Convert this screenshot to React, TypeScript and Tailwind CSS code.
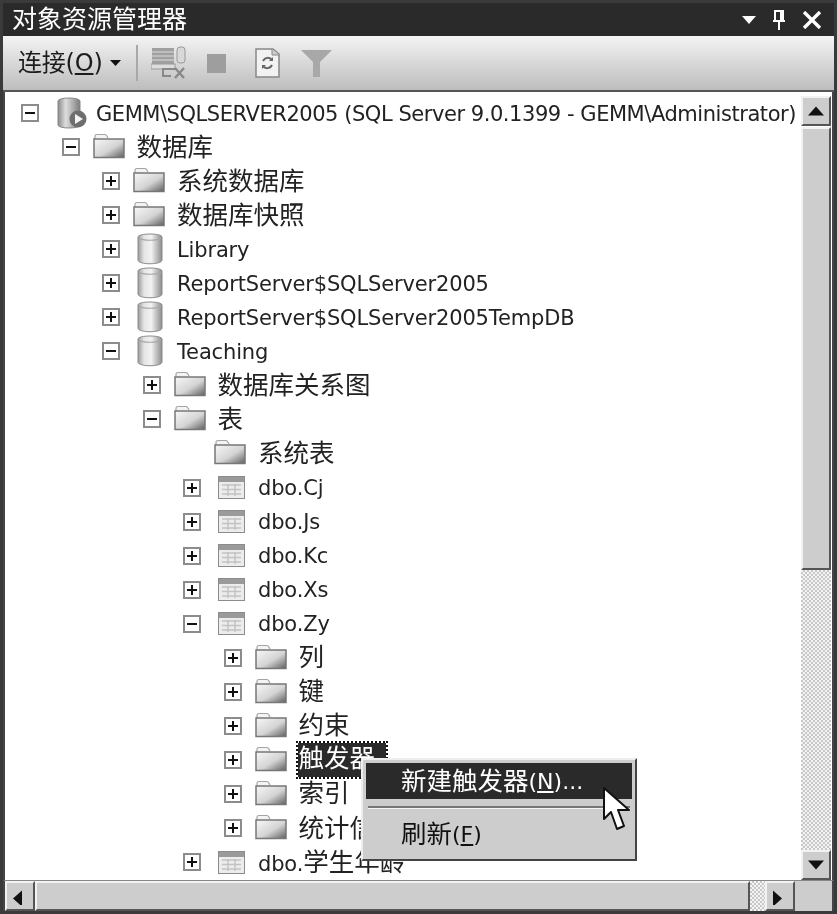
const FONT = "font-['DejaVu_Sans','Noto_Sans_CJK_SC',sans-serif]";

type NodeKind = "server" | "folder" | "db" | "table";
type TreeNode = { level: number; label: string; kind: NodeKind; exp?: "+" | "-"; focused?: boolean };

const nodes: TreeNode[] = [
  { level: 0, label: "GEMM\\SQLSERVER2005 (SQL Server 9.0.1399 - GEMM\\Administrator)", kind: "server", exp: "-" },
  { level: 1, label: "数据库", kind: "folder", exp: "-" },
  { level: 2, label: "系统数据库", kind: "folder", exp: "+" },
  { level: 2, label: "数据库快照", kind: "folder", exp: "+" },
  { level: 2, label: "Library", kind: "db", exp: "+" },
  { level: 2, label: "ReportServer$SQLServer2005", kind: "db", exp: "+" },
  { level: 2, label: "ReportServer$SQLServer2005TempDB", kind: "db", exp: "+" },
  { level: 2, label: "Teaching", kind: "db", exp: "-" },
  { level: 3, label: "数据库关系图", kind: "folder", exp: "+" },
  { level: 3, label: "表", kind: "folder", exp: "-" },
  { level: 4, label: "系统表", kind: "folder" },
  { level: 4, label: "dbo.Cj", kind: "table", exp: "+" },
  { level: 4, label: "dbo.Js", kind: "table", exp: "+" },
  { level: 4, label: "dbo.Kc", kind: "table", exp: "+" },
  { level: 4, label: "dbo.Xs", kind: "table", exp: "+" },
  { level: 4, label: "dbo.Zy", kind: "table", exp: "-" },
  { level: 5, label: "列", kind: "folder", exp: "+" },
  { level: 5, label: "键", kind: "folder", exp: "+" },
  { level: 5, label: "约束", kind: "folder", exp: "+" },
  { level: 5, label: "触发器", kind: "folder", exp: "+", focused: true },
  { level: 5, label: "索引", kind: "folder", exp: "+" },
  { level: 5, label: "统计信息", kind: "folder", exp: "+" },
  { level: 4, label: "dbo.学生年龄", kind: "table", exp: "+" },
];

function FolderIcon() {
  return (
    <svg className="-translate-y-[1px]" width="33" height="26" viewBox="0 0 33 26">
      <defs>
        <linearGradient id="fold" x1="0" y1="0" x2="1" y2="1">
          <stop offset="0" stopColor="#f8f8f8" />
          <stop offset="0.55" stopColor="#d4d4d4" />
          <stop offset="1" stopColor="#5e5e5e" />
        </linearGradient>
      </defs>
      <path d="M2 6 V3 Q2 1.5 4 1.5 H12 Q13.5 1.5 15 5" fill="#f4f4f4" stroke="#a4a4a4" strokeWidth="1.2" />
      <path d="M1 6 H31 V24.5 H1 Z" fill="url(#fold)" stroke="#777" strokeWidth="1.5" />
    </svg>
  );
}

function DbIcon() {
  return (
    <svg width="28" height="34" viewBox="0 0 28 34">
      <defs>
        <linearGradient id="cyl" x1="0" y1="0" x2="1" y2="0">
          <stop offset="0" stopColor="#9a9a9a" />
          <stop offset="0.25" stopColor="#e4e4e4" />
          <stop offset="0.55" stopColor="#f2f2f2" />
          <stop offset="1" stopColor="#8c8c8c" />
        </linearGradient>
      </defs>
      <path d="M2 5 C2 1 26 1 26 5 V28 C26 33 2 33 2 28 Z" fill="url(#cyl)" stroke="#8a8a8a" strokeWidth="1" />
      <path d="M3 6 C6 9 22 9 25 6" fill="none" stroke="#a8a8a8" strokeWidth="1.2" />
    </svg>
  );
}

function ServerIcon() {
  return (
    <svg width="32" height="34" viewBox="0 0 32 34">
      <defs>
        <linearGradient id="srv" x1="0" y1="0" x2="1" y2="0">
          <stop offset="0" stopColor="#8a8a8a" />
          <stop offset="0.35" stopColor="#dedede" />
          <stop offset="1" stopColor="#7c7c7c" />
        </linearGradient>
      </defs>
      <path d="M2 5 C2 1 24 1 24 5 V29 C24 33 2 33 2 29 Z" fill="url(#srv)" stroke="#888" strokeWidth="1" />
      <circle cx="22" cy="23" r="8.5" fill="#6e6e6e" />
      <path d="M19 18 L27 23 L19 28 Z" fill="#f4f4f4" />
    </svg>
  );
}

function TableIcon() {
  return (
    <svg width="27" height="23" viewBox="0 0 27 23">
      <rect x="0.5" y="0.5" width="26" height="22" fill="#ececec" stroke="#8c8c8c" />
      <rect x="1" y="1" width="25" height="5" fill="#9a9a9a" />
      <path d="M4 9 H23 M4 13.5 H23 M4 18 H23 M10 8 V20 M17 8 V20" stroke="#c2c2c2" strokeWidth="1.4" fill="none" />
    </svg>
  );
}

function Expander({ sign }: { sign?: "+" | "-" }) {
  if (!sign) return <div className="w-[18px] h-[18px] shrink-0" />;
  return (
    <div className="w-[18px] h-[18px] shrink-0 border-2 border-[#8c8c8c] bg-white flex items-center justify-center relative">
      <div className="w-[10px] h-[2px] bg-[#111]" />
      {sign === "+" && <div className="absolute w-[2px] h-[10px] bg-[#111]" />}
    </div>
  );
}

// CJK runs are set larger than the latin runs, as in the picture
function Label({ text, latin = "text-[21px]" }: { text: string; latin?: string }) {
  const parts = text.match(/[\u4e00-\u9fff]+|[^\u4e00-\u9fff]+/g) ?? [];
  return (
    <>
      {parts.map((p, i) =>
        /[\u4e00-\u9fff]/.test(p) ? (
          <span key={i} className="text-[25.5px]">{p}</span>
        ) : (
          <span key={i} className={latin}>{p}</span>
        )
      )}
    </>
  );
}

function Row({ node }: { node: TreeNode }) {
  return (
    <div className="h-[34.05px] flex items-center whitespace-nowrap shrink-0" style={{ paddingLeft: 16 + node.level * 40.5 }}>
      <Expander sign={node.exp} />
      <div className="w-[57px] shrink-0 pl-[13px] flex items-center">
        {node.kind === "folder" && <FolderIcon />}
        {node.kind === "db" && <div className="pl-[3px]"><DbIcon /></div>}
        {node.kind === "server" && <div className="pl-[4px]"><ServerIcon /></div>}
        {node.kind === "table" && <div className="pl-[4px]"><TableIcon /></div>}
      </div>
      {node.focused ? (
        <span className="leading-[30px] text-white bg-[#2a2a2a] outline-2 outline-dotted outline-[#111] -ml-[1px] pl-[1px] pr-[11px]"><Label text={node.label} /></span>
      ) : (
        <span className="leading-[30px] pt-[3px] text-[#222]">
          <Label text={node.label} latin={node.kind === "server" ? "text-[21px] tracking-[-0.45px]" : "text-[21px] tracking-[-0.15px]"} />
        </span>
      )}
    </div>
  );
}

function ScrollButton({ dir }: { dir: "up" | "down" | "left" | "right" }) {
  const tri = { up: "M1 11 L9 2 L17 11 Z", down: "M1 2 L17 2 L9 11 Z", left: "M11 1 L11 17 L2 9 Z", right: "M2 1 L2 17 L11 9 Z" }[dir];
  return (
    <div className="w-[30px] h-[30px] shrink-0 bg-[#cdcdcd] border-2 border-t-[#f2f2f2] border-l-[#f2f2f2] border-r-[#555] border-b-[#555] flex items-center justify-center">
      <svg width="18" height="18" viewBox="0 0 18 13" ><path d={tri} fill="#111" /></svg>
    </div>
  );
}

const DITHER = "bg-[repeating-conic-gradient(#c8c8c8_0_25%,#f4f4f4_0_50%)] bg-[length:4px_4px]";

export default function App() {
  return (
    <div className={`${FONT} w-[837px] h-[914px] relative bg-[#3a3a3a] p-[3px] flex flex-col overflow-hidden blur-[0.5px]`}>
      {/* title */}
      <div className="h-[33px] shrink-0 bg-[#2a2a2a] flex items-center pl-[9px] pr-[12px] text-white">
        <span className="text-[25px] leading-none">对象资源管理器</span>
        <div className="ml-auto flex items-center gap-[15px]">
          <svg width="14" height="8" viewBox="0 0 14 8"><path d="M0 0 H14 L7 8 Z" fill="#fff" /></svg>
          <svg width="16" height="22" viewBox="0 0 16 22"><path d="M4 2 H12 V12 H4 Z M2 12 H14 M8 12 V21 M10 2 V12" fill="none" stroke="#fff" strokeWidth="2" /></svg>
          <svg width="20" height="18" viewBox="0 0 20 18"><path d="M2 1 L18 17 M18 1 L2 17" stroke="#fff" strokeWidth="3.4" /></svg>
        </div>
      </div>
      {/* toolbar */}
      <div className="h-[56px] shrink-0 bg-gradient-to-b from-[#f4f4f4] to-[#bdbdbd] flex items-center pl-[15px] border-b-2 border-[#555]">
        <span className="text-[24px] text-[#1c1c1c] tracking-[-0.2px]">连接(<span className="underline underline-offset-2">O</span>)</span>
        <svg className="ml-[7px]" width="11" height="6" viewBox="0 0 11 6"><path d="M0 0 H11 L5.5 6 Z" fill="#111" /></svg>
        <div className="w-[2px] h-[36px] bg-[#a8a8a8] ml-[15px]" />
        <svg className="ml-[13px]" width="36" height="34" viewBox="0 0 36 34">
          <rect x="1" y="2" width="22" height="16" fill="#a0a0a0" />
          <path d="M1 6 H23 M1 10 H23 M1 14 H23" stroke="#c8c8c8" strokeWidth="1.5" />
          <rect x="0" y="18" width="24" height="5" fill="#ddd" stroke="#999" />
          <rect x="26" y="1" width="8" height="16" rx="3" fill="#d8d8d8" stroke="#999" />
          <path d="M24 23 H12 V30 H20" stroke="#888" strokeWidth="2" fill="none" />
          <path d="M24 22 L33 32 M33 22 L24 32" stroke="#888" strokeWidth="2.4" />
        </svg>
        <div className="w-[19px] h-[19px] bg-[#9e9e9e] ml-[20px]" />
        <svg className="ml-[29px]" width="25" height="30" viewBox="0 0 25 30">
          <path d="M1 1 H18 L24 6 V29 H1 Z" fill="#f2f2f2" stroke="#888" strokeWidth="1.5" />
          <path d="M17 1 V7 H24" fill="#ccc" stroke="#888" />
          <path d="M8 13 C10 9 15 9 17 12 M17 17 C15 21 10 21 8 18" fill="none" stroke="#666" strokeWidth="2" />
          <path d="M14 13 H18 V9 Z M11 17 H7 V21 Z" fill="#666" />
        </svg>
        <svg className="ml-[21px]" width="31" height="27" viewBox="0 0 31 27"><path d="M0 0 H31 L19 12 V27 H12 V12 Z" fill="#a8a8a8" /></svg>
      </div>
      {/* tree + vertical scrollbar */}
      <div className="flex-1 min-h-0 flex bg-white border-l-2 border-r-2 border-[#444]">
        <div className="flex-1 min-w-0 overflow-hidden flex flex-col pt-[4px]">
          {nodes.map((n) => <Row key={n.label} node={n} />)}
        </div>
        <div className="w-[31px] shrink-0 flex flex-col pt-[4px] bg-white">
          <ScrollButton dir="up" />
          <div className="h-[443px] mt-[1px] shrink-0 bg-[#cdcdcd] border-2 border-t-[#f2f2f2] border-l-[#f2f2f2] border-r-[#555] border-b-[#555] w-[30px]" />
          <div className={`flex-1 w-[30px] ${DITHER}`} />
          <ScrollButton dir="down" />
        </div>
      </div>
      {/* horizontal scrollbar */}
      <div className="h-[31px] shrink-0 flex bg-[#cdcdcd] border-l-2 border-r-2 border-[#444] border-t border-t-[#888]">
        <ScrollButton dir="left" />
        <div className="w-[715px] shrink-0 bg-[#cdcdcd] border-2 border-t-[#f2f2f2] border-l-[#f2f2f2] border-r-[#555] border-b-[#555]" />
        <div className={`w-[15px] shrink-0 ${DITHER}`} />
        <ScrollButton dir="right" />
        <div className="flex-1 bg-[#cdcdcd]" />
      </div>
      {/* context menu */}
      <div className="absolute left-[361px] top-[758px] w-[276px] h-[103px] bg-[#cdcdcd] border-2 border-t-[#eee] border-l-[#eee] border-r-[#444] border-b-[#444] p-[3px] text-[25.5px] text-[#111]">
        <div className="h-[36px] bg-[#2a2a2a] text-white pl-[35px] flex items-center"><span>新建触发器</span><span className="text-[22px]">(<span className="underline underline-offset-2">N</span>)...</span></div>
        <div className="mt-[7px] h-[3px] border-t-2 border-t-[#777] border-b border-b-[#f4f4f4] mx-[2px]" />
        <div className="h-[50px] pl-[35px] flex items-center"><span>刷新</span><span className="text-[22px]">(<span className="underline underline-offset-2">F</span>)</span></div>
      </div>
      {/* mouse cursor */}
      <svg className="absolute left-[602px] top-[786px]" width="30" height="48" viewBox="0 0 30 48">
        <path d="M2 2 V33 L9 26 L15 43 L22 40 L16 24 L27 24 Z" fill="#fff" stroke="#111" strokeWidth="2" strokeLinejoin="round" />
      </svg>
    </div>
  );
}
